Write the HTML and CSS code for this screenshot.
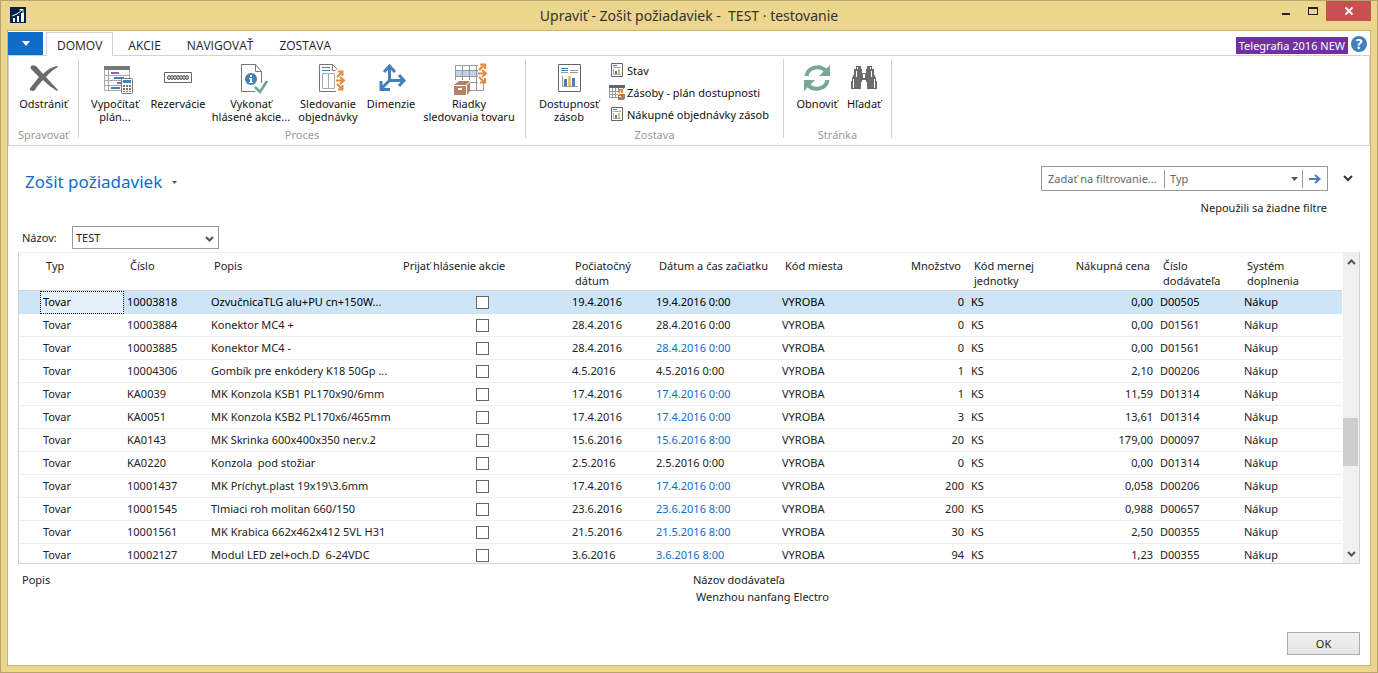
FILE: index.html
```html
<!DOCTYPE html>
<html lang="sk">
<head>
  <meta charset="UTF-8" />
  <meta name="viewport" content="width=device-width, initial-scale=1.0" />
  <title>Zošit požiadaviek</title>
  <link rel="stylesheet" href="styles.css">
</head>
<body>
  <div class="window">
    <header class="titlebar">
      <svg class="app-icon" width="16" height="16" viewBox="0 0 16 16">
        <rect width="16" height="16" fill="#00204e"/>
        <path d="M3 11h2v4H3zM7 9h2v6H7zM11 6h3v9h-3z" fill="#fff"/>
        <path d="M2 9l5-2 5-4M9.500 2.500H13V6" fill="none" stroke="#fff"/>
      </svg>
      <h1 class="window-title">Upraviť - Zošit požiadaviek - &nbsp;TEST · testovanie</h1>
      <div class="window-buttons">
        <button class="win-btn" aria-label="Minimalizovať"><svg width="10" height="10" viewBox="0 0 10 10"><path d="M1 7h8v2H1z" fill="#222"/></svg></button>
        <button class="win-btn" aria-label="Maximalizovať"><svg width="10" height="10" viewBox="0 0 10 10"><path d="M0 1h10v8H0zM1 3v5h8V3z" fill="#222" fill-rule="evenodd"/></svg></button>
        <button class="win-btn close" aria-label="Zavrieť"><svg width="10" height="10" viewBox="0 0 10 10"><path d="M1.500 1.500l7 7M8.500 1.500l-7 7" stroke="#fff" stroke-width="1.800"/></svg></button>
      </div>
    </header>

    <div class="client">
      <nav class="tabs">
        <button class="app-menu" aria-label="Ponuka"><svg width="8" height="5" viewBox="0 0 8 5"><path d="M0 0h8L4 5z" fill="#fff"/></svg></button>
        <a class="tab active" href="#">DOMOV</a>
        <a class="tab" href="#">AKCIE</a>
        <a class="tab" href="#">NAVIGOVAŤ</a>
        <a class="tab" href="#">ZOSTAVA</a>
        <span class="company">Telegrafia 2016 NEW</span>
        <button class="help" aria-label="Pomocník">?</button>
      </nav>

      <div class="ribbon">
        <section class="group group-manage">
          <div class="group-items">
            <button class="tool">
              <svg width="32" height="32" viewBox="0 0 32 32"><path d="M3 4q3-2 6 1l6 7q7-7 14-8l1 1q-6 3-12 10 6 7 12 13l-1 1q-7-4-14-11-6 6-8 10-2 2-5 0-1-1 1-3l8-10L3 7q-1-2 0-3z" fill="#6b6b6b"/></svg>
              <span>Odstrániť</span>
            </button>
          </div>
          <h2 class="group-name">Spravovať</h2>
        </section>

        <section class="group group-process">
          <div class="group-items">
            <button class="tool w-plan">
              <svg width="32" height="32" viewBox="0 0 32 32">
                <path d="M5.500 5.500h25v23h-25zM5 13.500h26M5 18.500h26M5 23.500h26M9.500 8v21" fill="none" stroke="#aaa"/>
                <path d="M5 4h26v4H5z" fill="#777"/>
                <path d="M12 10h8v2h-8zM18 20h4v2h-4z" fill="#8c63b8"/><path d="M15 15h10v2H15zM12 25h9v2h-9z" fill="#447fb9"/>
                <rect x="22.500" y="16.500" width="11" height="15" rx="1" fill="#fff" stroke="#777"/>
                <path d="M24 18h8v3h-8z" fill="#447fb9"/>
                <path d="M24 23h2v2h-2zM27 23h2v2h-2zM30 23h2v2h-2zM24 26h2v2h-2zM27 26h2v2h-2zM30 26h2v2h-2zM24 29h2v1h-2zM27 29h2v1h-2zM30 29h2v1h-2z" fill="#777"/>
              </svg>
              <span>Vypočítať<br>plán...</span>
            </button>
            <button class="tool w-reserve">
              <svg width="32" height="32" viewBox="0 0 32 32">
                <path d="M2.500 10.500h27v10h-27z" fill="#fff" stroke="#666"/>
                <g fill="#ccc" stroke="#555"><ellipse cx="7" cy="15.500" rx="1.500" ry="2"/><ellipse cx="10" cy="15.500" rx="1.500" ry="2"/><ellipse cx="13" cy="15.500" rx="1.500" ry="2"/><ellipse cx="16" cy="15.500" rx="1.500" ry="2"/><ellipse cx="19" cy="15.500" rx="1.500" ry="2"/><ellipse cx="22" cy="15.500" rx="1.500" ry="2"/><ellipse cx="25" cy="15.500" rx="1.500" ry="2"/></g>
              </svg>
              <span>Rezervácie</span>
            </button>
            <button class="tool w-carry">
              <svg width="32" height="32" viewBox="0 0 32 32">
                <path d="M20 29.500H6.500v-27h14l6 7V21M20.500 2.500v7h6" fill="#fff" stroke="#777"/>
                <circle cx="16" cy="17" r="6" fill="#447fb9"/>
                <path d="M15 13h2v2h-2zM14 16h3v4h1v1h-4v-1h1v-3h-1z" fill="#fff"/>
                <path d="M20 25l5 5 7-11" fill="none" stroke="#6da58e" stroke-width="2.500"/>
              </svg>
              <span>Vykonať<br>hlásené akcie...</span>
            </button>
            <button class="tool w-track">
              <svg width="32" height="32" viewBox="0 0 32 32">
                <path d="M24 29.500H7.500v-27h13l5 5M20.500 2.500v6h3" fill="#fff" stroke="#777"/>
                <path d="M10 5.500h8M10 8.500h8" stroke="#447fb9"/>
                <path d="M10.500 11.500h12v15h-12zM16.500 12v14" fill="none" stroke="#aaa"/>
                <path d="M25 15l5-5M26 9.500h4.500V14M24 18.500h7M28 15l4 3.500-4 3.500M25 22l5 5M26 27.500h4.500V23" fill="none" stroke="#e88b3c" stroke-width="2"/>
              </svg>
              <span>Sledovanie<br>objednávky</span>
            </button>
            <button class="tool w-dim">
              <svg width="32" height="32" viewBox="0 0 32 32">
                <path d="M14.500 5v13.500H28M14.500 18.500L6 27M9 10l5.500-6 5.500 6M24 13l5 5.500-5 5.500M6 19v8.500h9" fill="none" stroke="#447fb9" stroke-width="3"/>
              </svg>
              <span>Dimenzie</span>
            </button>
            <button class="tool w-lines">
              <svg width="32" height="32" viewBox="0 0 32 32">
                <path d="M3 9h24v5H3z" fill="#bdd4ea"/>
                <path d="M2.500 3.500h28v25h-28zM2 8.500h28M2 14.500h28M2 20.500h28M9.500 3v26M16.500 3v26M23.500 3v26" fill="none" stroke="#999"/>
                <path d="M25 2h8v19h-8z" fill="#fff"/>
                <path d="M26 8l5-5M27 2.500h5V7M25 11.500h7M29 8l4 3.500-4 3.500M26 15l5 5M27 20.500h5V16" fill="none" stroke="#e88b3c" stroke-width="2"/>
                <path d="M0 18h17v15H0z" fill="#fff"/><path d="M1 23l5-4h11l-4 4zM1 24h12v9H1zM14 23l3-3v9l-3 4z" fill="#b28262"/><path d="M5 26h4v2H5z" fill="#fff"/>
              </svg>
              <span>Riadky<br>sledovania tovaru</span>
            </button>
          </div>
          <h2 class="group-name">Proces</h2>
        </section>

        <section class="group group-report">
          <div class="group-items">
            <button class="tool w-avail">
              <svg width="32" height="32" viewBox="0 0 32 32">
                <path d="M5.500 2.500h22v27h-22z" fill="#fff" stroke="#666"/>
                <path d="M8 6.500h7M8 8.500h7" stroke="#447fb9"/><path d="M17 8.500h8M8 10.500h7M17 10.500h8" stroke="#999"/>
                <path d="M9.500 14v10.500H25" fill="none" stroke="#999"/>
                <path d="M11 17h3v7h-3zM19 16h3v8h-3z" fill="#447fb9"/><path d="M15 14h3v10h-3z" fill="#eabf69"/>
              </svg>
              <span>Dostupnosť<br>zásob</span>
            </button>
            <div class="tool-list">
              <button class="tool-small">
                <svg width="16" height="16" viewBox="0 0 16 16"><path d="M2.500 1.500h11v13h-11z" fill="#fff" stroke="#666"/><path d="M4 3.500h4" stroke="#447fb9"/><path d="M4 5.500h8M4.500 7v5.500H12" fill="none" stroke="#aaa"/><path d="M6 9h2v3H6z" fill="#447fb9"/><path d="M9 7h2v5H9z" fill="#eabf69"/></svg>
                <span>Stav</span>
              </button>
              <button class="tool-small">
                <svg width="16" height="16" viewBox="0 0 16 16"><path d="M.5 1.500h14v12H.5zM0 7.500h15M0 10.500h15M3.500 3v11M6.500 3v11M9.500 3v11" fill="none" stroke="#999"/><path d="M0 1h16v3H0z" fill="#666"/><path d="M9 5h7v11H9z" fill="#fff"/><path d="M10 9V6h3v3" fill="none" stroke="#e88b3c" stroke-width="2"/><path d="M9 11l2-1h5v4l-1 2H9z" fill="#a97b5d"/><path d="M10 12h2v1h-2z" fill="#fff"/></svg>
                <span>Zásoby - plán dostupnosti</span>
              </button>
              <button class="tool-small">
                <svg width="16" height="16" viewBox="0 0 16 16"><path d="M2.500 1.500h11v13h-11z" fill="#fff" stroke="#666"/><path d="M4 3.500h4" stroke="#447fb9"/><path d="M4 5.500h8M4.500 7v5.500H12" fill="none" stroke="#aaa"/><path d="M6 9h2v3H6z" fill="#447fb9"/><path d="M9 7h2v5H9z" fill="#eabf69"/></svg>
                <span>Nákupné objednávky zásob</span>
              </button>
            </div>
          </div>
          <h2 class="group-name">Zostava</h2>
        </section>

        <section class="group group-page">
          <div class="group-items">
            <button class="tool w-refresh">
              <svg width="32" height="32" viewBox="0 0 32 32">
                <path d="M5.500 14A11 10 0 0 1 25 9M26.500 18A11 10 0 0 1 7 23" fill="none" stroke="#76a797" stroke-width="4"/>
                <path d="M29 3v11H18zM3 29V18h11z" fill="#76a797"/>
              </svg>
              <span>Obnoviť</span>
            </button>
            <button class="tool w-find">
              <svg width="32" height="32" viewBox="0 0 32 32">
                <path d="M8 4h5v3h1v4h4V7h1V4h5v3h2v5l2 4v3h1v8H19v-7h-1v-2h-4v2h-1v7H3v-8h1v-3l2-4V7h2z" fill="#6b6b6b"/>
                <path d="M9 5h1v2H9zM22 5h1v2h-1zM5 17h1v9H5zM26 17h1v9h-1zM8 9h1v6H8zM23 9h1v6h-1zM15 12h2v4h-2z" fill="#fff"/>
              </svg>
              <span>Hľadať</span>
            </button>
          </div>
          <h2 class="group-name">Stránka</h2>
        </section>
      </div>

      <main class="page">
        <div class="page-head">
          <button class="page-title">Zošit požiadaviek
            <svg width="5" height="3" viewBox="0 0 5 3"><path d="M0 0h5L2.500 3z" fill="#555"/></svg>
          </button>
          <div class="filter-area">
            <form class="filter-bar">
              <input class="filter-text" type="text" placeholder="Zadať na filtrovanie..." aria-label="Filter">
              <div class="select-wrap filter-field">
                <select aria-label="Pole filtra"><option>Typ</option><option>Číslo</option><option>Popis</option></select>
                <svg class="arrow" width="7" height="4" viewBox="0 0 7 4"><path d="M0 0h7L3.500 4z" fill="#555"/></svg>
              </div>
              <button class="filter-go" type="button" aria-label="Použiť filter"><svg width="12" height="10" viewBox="0 0 12 10"><path d="M0 5h10M6 1l4.500 4L6 9" fill="none" stroke="#447fb9" stroke-width="2"/></svg></button>
            </form>
            <button class="expand" aria-label="Rozbaliť"><svg width="10" height="7" viewBox="0 0 10 7"><path d="M1 1l4 4 4-4" fill="none" stroke="#333" stroke-width="2"/></svg></button>
          </div>
        </div>
        <p class="filter-note">Nepoužili sa žiadne filtre</p>

        <div class="batch">
          <label for="batchName">Názov:</label>
          <div class="select-wrap batch-select">
            <select id="batchName"><option>TEST</option></select>
            <svg class="arrow" width="9" height="6" viewBox="0 0 9 6"><path d="M1 1l3.500 3.500L8 1" fill="none" stroke="#555" stroke-width="2"/></svg>
          </div>
        </div>

        <div class="grid">
          <div class="grid-view">
            <table>
              <colgroup>
                <col class="c-mark"><col class="c-std"><col class="c-std"><col><col class="c-check"><col class="c-std"><col class="c-time">
                <col class="c-std"><col class="c-num"><col class="c-std"><col class="c-num"><col class="c-std"><col class="c-last">
              </colgroup>
              <thead>
                <tr><th></th><th>Typ</th><th>Číslo</th><th>Popis</th><th>Prijať hlásenie akcie</th><th>Počiatočný<br>dátum</th><th>Dátum a čas začiatku</th><th>Kód miesta</th><th class="num">Množstvo</th><th>Kód mernej<br>jednotky</th><th class="num">Nákupná cena</th><th>Číslo<br>dodávateľa</th><th>Systém<br>doplnenia</th></tr>
              </thead>
              <tbody>
                <tr class="selected"><td></td><td class="focus">Tovar</td><td>10003818</td><td>OzvučnicaTLG alu+PU cn+150W...</td><td class="check"><input type="checkbox" aria-label="Prijať hlásenie akcie"></td><td>19.4.2016</td><td>19.4.2016 0:00</td><td>VYROBA</td><td class="num">0</td><td>KS</td><td class="num">0,00</td><td>D00505</td><td>Nákup</td></tr>
                <tr><td></td><td>Tovar</td><td>10003884</td><td>Konektor MC4 +</td><td class="check"><input type="checkbox" aria-label="Prijať hlásenie akcie"></td><td>28.4.2016</td><td>28.4.2016 0:00</td><td>VYROBA</td><td class="num">0</td><td>KS</td><td class="num">0,00</td><td>D01561</td><td>Nákup</td></tr>
                <tr><td></td><td>Tovar</td><td>10003885</td><td>Konektor MC4 -</td><td class="check"><input type="checkbox" aria-label="Prijať hlásenie akcie"></td><td>28.4.2016</td><td class="blue">28.4.2016 0:00</td><td>VYROBA</td><td class="num">0</td><td>KS</td><td class="num">0,00</td><td>D01561</td><td>Nákup</td></tr>
                <tr><td></td><td>Tovar</td><td>10004306</td><td>Gombík pre enkódery K18 50Gp ...</td><td class="check"><input type="checkbox" aria-label="Prijať hlásenie akcie"></td><td>4.5.2016</td><td>4.5.2016 0:00</td><td>VYROBA</td><td class="num">1</td><td>KS</td><td class="num">2,10</td><td>D00206</td><td>Nákup</td></tr>
                <tr><td></td><td>Tovar</td><td>KA0039</td><td>MK Konzola KSB1 PL170x90/6mm</td><td class="check"><input type="checkbox" aria-label="Prijať hlásenie akcie"></td><td>17.4.2016</td><td class="blue">17.4.2016 0:00</td><td>VYROBA</td><td class="num">1</td><td>KS</td><td class="num">11,59</td><td>D01314</td><td>Nákup</td></tr>
                <tr><td></td><td>Tovar</td><td>KA0051</td><td>MK Konzola KSB2 PL170x6/465mm</td><td class="check"><input type="checkbox" aria-label="Prijať hlásenie akcie"></td><td>17.4.2016</td><td class="blue">17.4.2016 0:00</td><td>VYROBA</td><td class="num">3</td><td>KS</td><td class="num">13,61</td><td>D01314</td><td>Nákup</td></tr>
                <tr><td></td><td>Tovar</td><td>KA0143</td><td>MK Skrinka 600x400x350 ner.v.2</td><td class="check"><input type="checkbox" aria-label="Prijať hlásenie akcie"></td><td>15.6.2016</td><td class="blue">15.6.2016 8:00</td><td>VYROBA</td><td class="num">20</td><td>KS</td><td class="num">179,00</td><td>D00097</td><td>Nákup</td></tr>
                <tr><td></td><td>Tovar</td><td>KA0220</td><td>Konzola &nbsp;pod stožiar</td><td class="check"><input type="checkbox" aria-label="Prijať hlásenie akcie"></td><td>2.5.2016</td><td>2.5.2016 0:00</td><td>VYROBA</td><td class="num">0</td><td>KS</td><td class="num">0,00</td><td>D01314</td><td>Nákup</td></tr>
                <tr><td></td><td>Tovar</td><td>10001437</td><td>MK Príchyt.plast 19x19\3.6mm</td><td class="check"><input type="checkbox" aria-label="Prijať hlásenie akcie"></td><td>17.4.2016</td><td class="blue">17.4.2016 0:00</td><td>VYROBA</td><td class="num">200</td><td>KS</td><td class="num">0,058</td><td>D00206</td><td>Nákup</td></tr>
                <tr><td></td><td>Tovar</td><td>10001545</td><td>Tlmiaci roh molitan 660/150</td><td class="check"><input type="checkbox" aria-label="Prijať hlásenie akcie"></td><td>23.6.2016</td><td class="blue">23.6.2016 8:00</td><td>VYROBA</td><td class="num">200</td><td>KS</td><td class="num">0,988</td><td>D00657</td><td>Nákup</td></tr>
                <tr><td></td><td>Tovar</td><td>10001561</td><td>MK Krabica 662x462x412 5VL H31</td><td class="check"><input type="checkbox" aria-label="Prijať hlásenie akcie"></td><td>21.5.2016</td><td class="blue">21.5.2016 8:00</td><td>VYROBA</td><td class="num">30</td><td>KS</td><td class="num">2,50</td><td>D00355</td><td>Nákup</td></tr>
                <tr><td></td><td>Tovar</td><td>10002127</td><td>Modul LED zel+och.D &nbsp;6-24VDC</td><td class="check"><input type="checkbox" aria-label="Prijať hlásenie akcie"></td><td>3.6.2016</td><td class="blue">3.6.2016 8:00</td><td>VYROBA</td><td class="num">94</td><td>KS</td><td class="num">1,23</td><td>D00355</td><td>Nákup</td></tr>
              </tbody>
            </table>
          </div>
          <div class="scrollbar">
            <svg width="9" height="6" viewBox="0 0 9 6"><path d="M1 5l3.500-3.500L8 5" fill="none" stroke="#555" stroke-width="2"/></svg>
            <div class="track"><div class="space-above"></div><div class="thumb"></div><div class="space-below"></div></div>
            <svg width="9" height="6" viewBox="0 0 9 6"><path d="M1 1l3.500 3.500L8 1" fill="none" stroke="#555" stroke-width="2"/></svg>
          </div>
        </div>

        <dl class="details">
          <div><dt>Popis</dt><dd></dd></div>
          <div><dt>Názov dodávateľa</dt><dd>Wenzhou nanfang Electro</dd></div>
        </dl>

        <div class="actions">
          <button class="ok">OK</button>
        </div>
      </main>
    </div>
  </div>
</body>
</html>
```
FILE: styles.css
```css
:root {
  --blue: #0f6cc8;
  --gold: #ecd58c;
  --line: #d2d2d2;
}

* {
  box-sizing: border-box;
  margin: 0;
  padding: 0;
}

body {
  font-family: "Noto Sans", "Open Sans", sans-serif;
  font-size: 11px;
  line-height: 15px;
  color: #222;
}

button, input, select {
  font: inherit;
  color: inherit;
  border: 0;
  border-radius: 0;
  background: none;
}

svg {
  display: block;
  flex-shrink: 0;
  overflow: visible;
}

/* window frame */
.window {
  display: flex;
  flex-direction: column;
  height: 100vh;
  padding: 0 6px 6px;
  background: var(--gold);
  border: 1px solid #b8a56a;
}

.titlebar {
  display: grid;
  grid-template-columns: 1fr auto 1fr;
  height: 29px;
  flex-shrink: 0;
}

.app-icon {
  margin: 6px 0 0 3px;
}

.window-title {
  font-size: 14px;
  font-weight: 400;
  line-height: 29px;
  color: #333;
}

.window-buttons {
  display: flex;
  justify-content: flex-end;
}

.win-btn {
  display: flex;
  align-items: center;
  justify-content: center;
  width: 27px;
  height: 20px;
}

.win-btn.close {
  width: 45px;
  background: #c75050;
}

.client {
  display: flex;
  flex-direction: column;
  flex: 1;
  min-height: 0;
  background: #fff;
  border: 1px solid #c9b570;
}

/* tabs */
.tabs {
  display: flex;
  align-items: flex-end;
  height: 25px;
  padding-right: 3px;
  border-bottom: 1px solid var(--line);
  flex-shrink: 0;
}

.app-menu {
  display: flex;
  align-items: center;
  justify-content: center;
  width: 35px;
  height: 23px;
  margin-right: 3px;
  background: var(--blue);
}

.tab {
  height: 24px;
  padding: 0 10px;
  margin-right: 4px;
  border: 1px solid transparent;
  border-bottom: 0;
  font-family: "Open Sans", sans-serif;
  font-size: 12px;
  line-height: 27px;
  color: #222;
  text-decoration: none;
}

.tab.active {
  margin-bottom: -1px;
  background: #fff;
  border-color: var(--line);
  line-height: 25px;
}

.company {
  margin: 0 3px 1px auto;
  padding: 0 3px;
  background: #7030a0;
  color: #fff;
  line-height: 17px;
}

.help {
  width: 16px;
  height: 16px;
  margin-bottom: 3px;
  border-radius: 50%;
  background: #447fb9;
  color: #fff;
  font-size: 14px;
  font-weight: 700;
  line-height: 16px;
}

/* ribbon */
.ribbon {
  display: flex;
  height: 90px;
  padding: 3px 0 7px;
  border-bottom: 1px solid var(--line);
  border-right: 1px solid var(--line);
  border-left: 1px solid var(--line);
  flex-shrink: 0;
}

.group {
  display: flex;
  flex-direction: column;
  justify-content: space-between;
  border-right: 1px solid var(--line);
}

.group-items {
  display: flex;
}

.group-name {
  font-size: 11px;
  font-weight: 400;
  line-height: 7px;
  text-align: center;
  color: #999;
}

.group-manage { width: 70px; }
.group-process { width: 447px; }
.group-process .group-items { padding-left: 5px; }
.group-report { width: 258px; }
.group-report .group-items { padding-left: 8px; }
.group-page { width: 108px; }
.group-page .group-items { padding-left: 9px; }

.tool {
  display: flex;
  flex-direction: column;
  align-items: center;
  gap: 3px;
  width: 70px;
  padding-top: 3px;
  font-size: 11px;
  line-height: 13px;
  text-align: center;
  white-space: nowrap;
  color: #111;
}

.w-plan { width: 62px; }
.w-reserve { width: 64px; }
.w-carry { width: 82px; }
.w-track { width: 72px; }
.w-dim { width: 54px; }
.w-lines { width: 102px; }
.w-avail { width: 70px; }
.w-refresh { width: 48px; }
.w-find { width: 46px; }

.tool-list {
  padding-left: 5px;
}

.tool-small {
  display: flex;
  align-items: center;
  gap: 2px;
  height: 22px;
  white-space: nowrap;
  color: #111;
}

/* page */
.page {
  display: flex;
  flex-direction: column;
  flex: 1;
  min-height: 0;
  padding: 20px 10px 10px;
}

.page-head {
  display: flex;
  justify-content: space-between;
  align-items: flex-start;
  flex-shrink: 0;
}

.page-title {
  display: flex;
  align-items: center;
  gap: 10px;
  padding-left: 7px;
  margin-top: 4px;
  font-size: 17px;
  line-height: 24px;
  color: var(--blue);
}

.filter-area {
  display: flex;
  align-items: center;
}

.filter-bar {
  display: flex;
  align-items: center;
  width: 287px;
  height: 25px;
  border: 1px solid #999;
}

.filter-text {
  width: 122px;
  padding-left: 6px;
}

.filter-text::placeholder {
  color: #666;
  opacity: 1;
}

.select-wrap {
  position: relative;
}

.select-wrap select {
  width: 100%;
  height: 100%;
  appearance: none;
}

.select-wrap .arrow {
  position: absolute;
  right: 4px;
  top: 50%;
  margin-top: -2px;
  pointer-events: none;
}

.filter-field {
  flex: 1;
  height: 18px;
  border: solid #999;
  border-width: 0 1px;
  color: #666;
}

.filter-field select {
  padding-left: 5px;
}

.filter-go {
  display: flex;
  align-items: center;
  justify-content: center;
  width: 24px;
  height: 23px;
}

.expand {
  padding: 8px 7px 8px 15px;
}

.filter-note {
  margin: 6px 33px 0 0;
  text-align: right;
}

.batch {
  display: flex;
  align-items: center;
  margin-top: 11px;
  padding-left: 4px;
  flex-shrink: 0;
}

.batch label {
  width: 50px;
}

.batch-select {
  width: 147px;
  height: 23px;
  border: 1px solid #999;
}

.batch-select select {
  padding-left: 3px;
}

/* lines grid */
.grid {
  display: flex;
  flex: 1;
  min-height: 0;
  margin-top: 3px;
  border: 1px solid var(--line);
  border-top-color: #eee;
}

.grid-view {
  flex: 1;
  overflow: hidden;
}

table {
  width: 100%;
  table-layout: fixed;
  border-collapse: separate;
  border-spacing: 0;
}

.c-mark { width: 21px; }
.c-std { width: 84px; }
.c-check { width: 172px; }
.c-time { width: 126px; }
.c-num { width: 105px; }
.c-last { width: 101px; }

th {
  height: 38px;
  padding: 5px 0 0 6px;
  border-bottom: 1px solid var(--line);
  font-weight: 400;
  text-align: left;
  vertical-align: top;
  white-space: nowrap;
}

th.num {
  padding-right: 7px;
}

td {
  height: 23px;
  padding: 0 0 0 3px;
  border-bottom: 1px solid #eee;
  line-height: 22px;
  white-space: nowrap;
}

td.num {
  padding-right: 4px;
}

.num {
  text-align: right;
}

td.blue {
  color: var(--blue);
}

.selected td {
  background: #cde5f7;
  border-color: #cde5f7;
  color: #000;
}

.selected .focus {
  background: #e5f1fa;
  border-color: #e5f1fa;
  outline: 1px dotted #000;
  outline-offset: -1px;
}

td.check {
  padding: 0 1px 0 0;
}

.check input {
  display: block;
  width: 13px;
  height: 13px;
  margin: 0 auto;
  appearance: none;
  background: #fff;
  border: 1px solid #666;
}

.scrollbar {
  display: flex;
  flex-direction: column;
  align-items: center;
  width: 16px;
  margin-left: 1px;
  padding: 6px 0;
  background: #f0f0f0;
}

.track {
  display: flex;
  flex-direction: column;
  flex: 1;
  width: 100%;
  padding: 5px 0;
}

.space-above { flex: 149; }
.thumb { flex: 48; margin-right: 1px; background: #cdcdcd; }
.space-below { flex: 80; }

/* details and footer */
.details {
  display: grid;
  grid-template-columns: 1fr 1fr;
  column-gap: 8px;
  min-height: 68px;
  padding: 7px 4px 0;
  flex-shrink: 0;
}

.details dt {
  line-height: 17px;
}

.details dd {
  padding-left: 3px;
  line-height: 17px;
}

.actions {
  display: flex;
  justify-content: flex-end;
  flex-shrink: 0;
}

.ok {
  width: 73px;
  height: 23px;
  border: 1px solid #acacac;
  background: linear-gradient(#f0f0f0, #e5e5e5);
}
```
